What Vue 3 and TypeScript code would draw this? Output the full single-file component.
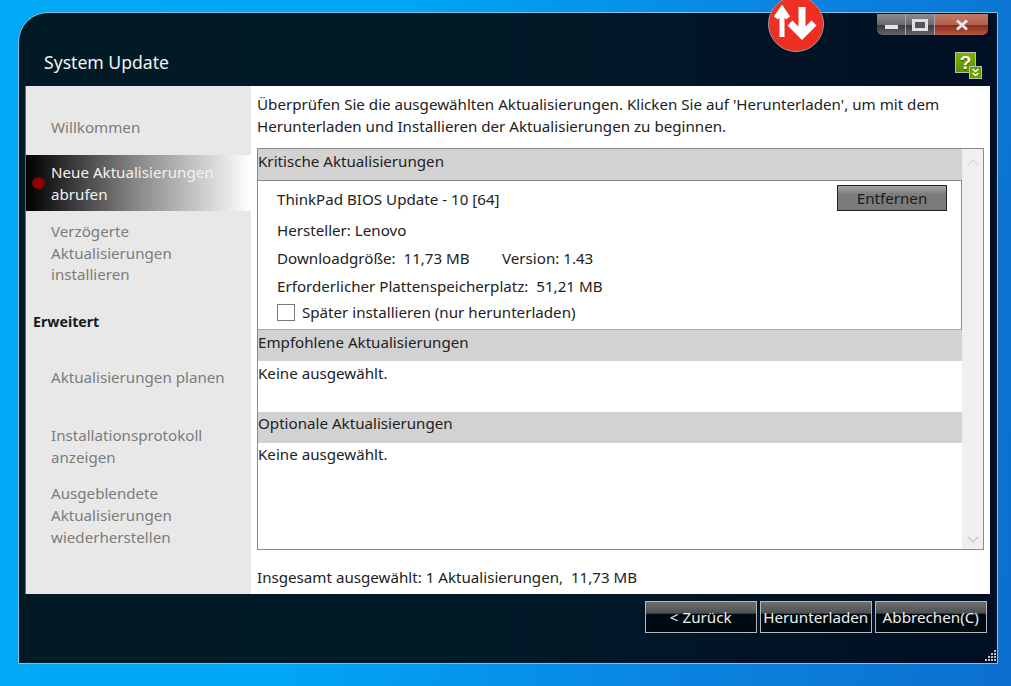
<script setup lang="ts">
interface NavItem { lines: string[]; active?: boolean; cls: string }
const top: NavItem[] = [
  { lines: ['Willkommen'], cls: 'n1' },
  { lines: ['Neue Aktualisierungen', 'abrufen'], active: true, cls: 'n2' },
  { lines: ['Verzögerte', 'Aktualisierungen', 'installieren'], cls: 'n3' },
]
const extra: NavItem[] = [
  { lines: ['Aktualisierungen planen'], cls: 'n4' },
  { lines: ['Installationsprotokoll', 'anzeigen'], cls: 'n5' },
  { lines: ['Ausgeblendete', 'Aktualisierungen', 'wiederherstellen'], cls: 'n6' },
]
const buttons = ['< Zurück', 'Herunterladen', 'Abbrechen(C)']
</script>

<template>
  <div class="desktop">
    <div class="window">
      <header class="titlebar">
        <div class="title">System Update</div>
        <div class="controls">
          <span class="ctl ctl-min"><i class="min-glyph"></i></span>
          <span class="ctl ctl-max"><i class="max-glyph"></i></span>
          <span class="ctl ctl-close">
            <svg width="16" height="12" viewBox="0 0 16 12"><path d="M3 1.5 L13 10.5 M13 1.5 L3 10.5" stroke="#e4e6ea" stroke-width="3" fill="none"/></svg>
          </span>
        </div>
        <div class="help">
          <span class="help-main">?</span>
          <span class="help-sub">
            <svg width="9" height="9" viewBox="0 0 9 9"><path d="M1.5 1 L4.5 3.5 L7.5 1 M1.5 5 L4.5 7.5 L7.5 5" stroke="#fff" stroke-width="1.4" fill="none"/></svg>
          </span>
        </div>
      </header>

      <div class="body">
        <nav class="side">
          <div v-for="n in top" :key="n.cls" class="nav" :class="[n.cls, { active: n.active }]">
            <i v-if="n.active" class="dot"></i>
            <div>
              <div v-for="l in n.lines" :key="l">{{ l }}</div>
            </div>
          </div>
          <div class="side-head">Erweitert</div>
          <div v-for="n in extra" :key="n.cls" class="nav" :class="n.cls">
            <div>
              <div v-for="l in n.lines" :key="l">{{ l }}</div>
            </div>
          </div>
        </nav>

        <main class="content">
          <p class="intro">Überprüfen Sie die ausgewählten Aktualisierungen. Klicken Sie auf 'Herunterladen', um mit dem<br>Herunterladen und Installieren der Aktualisierungen zu beginnen.</p>

          <div class="listbox">
            <div class="listmain">
              <div class="sec-head first">Kritische Aktualisierungen</div>
              <div class="item">
                <div class="item-top">
                  <span>ThinkPad BIOS Update - 10 [64]</span>
                  <span class="remove">Entfernen</span>
                </div>
                <div class="row r1">Hersteller: Lenovo</div>
                <div class="row r2"><span class="dl">Downloadgröße:&nbsp; 11,73 MB</span><span>Version: 1.43</span></div>
                <div class="row r3">Erforderlicher Plattenspeicherplatz:&nbsp; 51,21 MB</div>
                <label class="row r4"><i class="check"></i>Später installieren (nur herunterladen)</label>
              </div>
              <div class="sec-head">Empfohlene Aktualisierungen</div>
              <div class="none n-a">Keine ausgewählt.</div>
              <div class="sec-head sec-opt">Optionale Aktualisierungen</div>
              <div class="none n-b">Keine ausgewählt.</div>
            </div>
            <div class="scroll">
              <svg width="14" height="8" viewBox="0 0 14 8"><path d="M2 7 L7 2 L12 7" stroke="#dcdcdc" stroke-width="1.5" fill="none"/></svg>
              <svg width="14" height="8" viewBox="0 0 14 8"><path d="M2 1 L7 6 L12 1" stroke="#c8c8c8" stroke-width="1.5" fill="none"/></svg>
            </div>
          </div>

          <div class="total">Insgesamt ausgewählt: 1 Aktualisierungen,&nbsp; 11,73 MB</div>
        </main>
      </div>

      <footer class="foot">
        <button v-for="b in buttons" :key="b" class="btn" type="button">{{ b }}</button>
      </footer>

      <svg class="grip" width="14" height="14" viewBox="0 0 14 14">
        <g fill="#b9c6cc">
          <rect x="11" y="1" width="2" height="2"/>
          <rect x="11" y="4" width="2" height="2"/><rect x="8" y="4" width="2" height="2"/>
          <rect x="11" y="7" width="2" height="2"/><rect x="8" y="7" width="2" height="2"/><rect x="5" y="7" width="2" height="2"/>
          <rect x="11" y="10" width="2" height="2"/><rect x="8" y="10" width="2" height="2"/><rect x="5" y="10" width="2" height="2"/><rect x="2" y="10" width="2" height="2"/>
        </g>
      </svg>
    </div>

    <div class="badge">
      <svg width="56" height="56" viewBox="0 0 56 56">
        <path d="M13 40 V12 M7 21 L13 12 L19 21" stroke="#fff" stroke-width="5" fill="none"/>
        <path d="M33 10 V38 M21 26 L33 38 L45 26" stroke="#fff" stroke-width="7" fill="none"/>
      </svg>
    </div>
  </div>
</template>

<style>
html, body { margin: 0; padding: 0; overflow: hidden; }
</style>

<style scoped>
.desktop {
  position: relative;
  width: 1011px;
  height: 686px;
  overflow: hidden;
  background: linear-gradient(100deg, #00a9f7 0%, #00a6f4 35%, #0a84e0 70%, #0c6fcf 100%);
  font-family: "Noto Sans", "Open Sans", sans-serif;
  font-size: 15.15px;
  color: #222;
}
.window {
  position: absolute;
  left: 18px;
  top: 12px;
  width: 980px;
  height: 652px;
  box-sizing: border-box;
  border: 1px solid #7fc0de;
  border-top-left-radius: 30px;
  background: linear-gradient(90deg, #011a26 0%, #011a28 50%, #010f24 100%);
  display: flex;
  flex-direction: column;
  padding: 0 7px;
}
.titlebar { height: 73px; position: relative; flex: none; }
.title { position: absolute; left: 18px; top: 37px; color: #f2f4f5; font-size: 17.6px; line-height: 24px; }
.controls {
  position: absolute;
  right: 2px;
  top: 1px;
  display: flex;
  height: 21px;
  border-radius: 0 0 5px 5px;
  overflow: hidden;
}
.ctl { display: flex; align-items: center; justify-content: center; height: 21px; box-sizing: border-box; }
.ctl-min { width: 29px; background: linear-gradient(#8c8c8e, #6a6a6c 50%, #3c3c40 55%, #66666a); border-right: 1px solid #a6a6a8; border-radius: 0 0 0 5px; }
.ctl-max { width: 29px; background: linear-gradient(#8c8c8e, #6a6a6c 50%, #3c3c40 55%, #66666a); border-right: 1px solid #a6a6a8; }
.ctl-close { width: 53px; background: linear-gradient(#c07a66, #b06450 50%, #8c2c18 55%, #b45a44); border-radius: 0 0 5px 0; }
.min-glyph { display: block; width: 13px; height: 4px; background: #e2e4e8; margin-top: 4px; }
.max-glyph { display: block; width: 16px; height: 12px; box-sizing: border-box; border: 3px solid #dde0e6; background: #555; }
.help { position: absolute; right: 8px; top: 39px; width: 27px; height: 27px; }
.help-main {
  position: absolute; left: 0; top: 0; width: 21px; height: 21px; box-sizing: border-box;
  border: 1px solid #b8c0b0; background: linear-gradient(#7cb400, #5a9000); color: #fff;
  font: bold 19px/19px "Liberation Sans", sans-serif; text-align: center;
  text-shadow: 0 1px 1px #2c4a00;
}
.help-sub {
  position: absolute; right: 0; bottom: 0; width: 13px; height: 13px; box-sizing: border-box;
  border: 1px solid #b8c0b0; background: #64a000; display: flex; align-items: center; justify-content: center;
}
.body { flex: none; display: flex; height: 508px; border-left: 1px solid #5f6f78; margin-left: -1px; }
.side { width: 225px; flex: none; background: #e8e8e8; color: #7c7c7c; position: relative; }
.nav { padding-left: 25px; line-height: 21.7px; display: flex; align-items: center; position: relative; }
.n1 { height: 69px; padding-top: 15px; box-sizing: border-box; }
.n2 { height: 56px; color: #f2f2f2; padding-top: 2px; box-sizing: border-box; }
.n3 { margin-top: 10px; }
.n4 { margin-top: 34px; }
.n5 { margin-top: 36px; }
.n6 { margin-top: 15px; }
.active { background: linear-gradient(90deg, #000 0%, #8a8a8a 50%, #fff 100%); }
.dot { position: absolute; left: 6px; top: 22px; width: 13px; height: 12px; border-radius: 50%; background: #8c0000; }
.side-head { margin-top: 25px; padding-left: 7px; font-weight: 700; color: #1a1a1a; line-height: 22px; font-size: 14.2px; }
.content { flex: 1; background: #fff; position: relative; padding: 0 6px; min-width: 0; }
.intro { margin: 0; padding-top: 7px; line-height: 22px; height: 55px; color: #222; white-space: nowrap; }
.listbox {
  display: flex;
  width: 727px;
  height: 402px;
  box-sizing: border-box;
  border: 1px solid #8a8a8a;
}
.listmain { width: 704px; flex: none; }
.sec-head { height: 31px; background: #d2d2d2; line-height: 25px; }
.sec-opt { line-height: 23px; }
.item {
  height: 150px;
  box-sizing: border-box;
  border: 1px solid #8a8a8a;
  border-left: none;
  border-bottom: 1px solid #a8a8a8;
  padding-left: 19px;
  position: relative;
}
.item-top { display: flex; align-items: center; justify-content: space-between; height: 36px; padding-right: 14px; }
.remove {
  width: 110px; height: 26px; box-sizing: border-box; margin-bottom: 2px;
  border: 1px solid #222; text-align: center; line-height: 24px;
  background: linear-gradient(#a8a8a8, #7c7c7c 35%, #7a7a7a);
  color: #1a1a1a;
}
.row { line-height: 22px; display: flex; align-items: center; }
.r1 { margin-top: 2px; }
.r2 { margin-top: 6px; }
.r3 { margin-top: 6px; }
.r4 { margin-top: 4px; }
.dl { width: 225px; }
.check { width: 18px; height: 17px; box-sizing: border-box; border: 1px solid #7a7a7a; margin-right: 7px; background: #fff; }
.none { line-height: 24px; height: 50px; }
.n-a { height: 51px; }
.n-b { line-height: 23px; }
.scroll {
  flex: 1;
  background: #efefef;
  display: flex;
  flex-direction: column;
  justify-content: space-between;
  align-items: center;
  padding: 9px 0 5px;
}
.total { margin-top: 16px; line-height: 22px; }
.foot { flex: 1; display: flex; justify-content: flex-end; gap: 2.5px; padding: 7px 3px 0 0; align-items: flex-start; }
.btn {
  width: 112.5px; height: 32px; padding: 0; box-sizing: border-box;
  border: 1px solid #b4b8ba;
  background: linear-gradient(#6e6e6e, #4e5052 38%, #000a12 39%, #000a12);
  color: #f0f0f0;
  font: inherit;
  font-size: 15.2px;
}
.grip { position: absolute; right: 0; bottom: 0; }
.badge {
  position: absolute;
  left: 768px;
  top: -4px;
  width: 56px;
  height: 56px;
  box-sizing: border-box;
  border-radius: 50%;
  background: #ee3024;
  border: 1px solid #9a9a9a;
  overflow: hidden;
}
</style>
